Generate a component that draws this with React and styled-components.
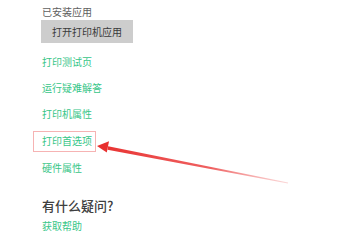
import React from "react";
import styled, { createGlobalStyle } from "styled-components";

const Global = createGlobalStyle`
  html, body { margin: 0; padding: 0; background: #fff; }
  body { font-family: "Noto Sans CJK SC", "Noto Sans", sans-serif; }
`;

const Page = styled.div`
  position: relative;
  width: 357px;
  height: 240px;
  overflow: hidden;
  background: #fff;
  padding: 5px 0 0 42px;
  box-sizing: border-box;
  display: flex;
  flex-direction: column;
  align-items: flex-start;
`;

const Title = styled.div`
  font-size: 10px;
  line-height: 14px;
  color: #606060;
`;

const Button = styled.button`
  margin: 1px 0 0 -1px;
  height: 23px;
  padding: 0 11px;
  border: none;
  background: #cdcdcd;
  color: #3a3a3a;
  font-family: inherit;
  font-size: 10px;
  line-height: 23px;
`;

const Links = styled.div`
  margin-top: 6px;
  display: flex;
  flex-direction: column;
  align-items: flex-start;
`;

const Link = styled.a`
  position: relative;
  display: block;
  height: ${(p) => p.$h || 26}px;
  line-height: 26px;
  font-size: 10px;
  color: #38c688;
  text-decoration: none;

  ${(p) =>
    p.$highlight &&
    `
    &::before {
      content: "";
      position: absolute;
      left: -9px;
      right: -4px;
      top: 3px;
      height: 21px;
      border: 1px solid #f6b3b3;
      box-sizing: border-box;
    }
  `}
`;

const Heading = styled.div`
  margin-top: 17px;
  font-size: 13px;
  line-height: 16px;
  font-weight: 500;
  color: #404040;
`;

const Help = styled.a`
  margin-top: 5px;
  font-size: 10px;
  line-height: 14px;
  color: #38c688;
  text-decoration: none;
`;

const Overlay = styled.svg`
  position: absolute;
  left: 0;
  top: 0;
  pointer-events: none;
`;

function Arrow() {
  return (
    <Overlay width="357" height="240" viewBox="0 0 357 240">
      <defs>
        <linearGradient id="fade" x1="97" y1="146" x2="288" y2="183" gradientUnits="userSpaceOnUse">
          <stop offset="0" stopColor="#e8302f" stopOpacity="1" />
          <stop offset="0.6" stopColor="#ec4545" stopOpacity="0.85" />
          <stop offset="1" stopColor="#f49090" stopOpacity="0.35" />
        </linearGradient>
      </defs>
      <polygon
        points="107.5,149.7 108.1,146.3 288.1,182.6 287.9,183.4"
        fill="url(#fade)"
      />
      <polygon points="97,146 109,141.3 106.8,152.6" fill="#e8302f" />
    </Overlay>
  );
}

export default function App() {
  return (
    <>
      <Global />
      <Page>
        <Title>已安装应用</Title>
        <Button>打开打印机应用</Button>
        <Links>
          <Link>打印测试页</Link>
          <Link>运行疑难解答</Link>
          <Link $h={27}>打印机属性</Link>
          <Link $highlight $h={27}>打印首选项</Link>
          <Link>硬件属性</Link>
        </Links>
        <Heading>有什么疑问?</Heading>
        <Help>获取帮助</Help>
        <Arrow />
      </Page>
    </>
  );
}
